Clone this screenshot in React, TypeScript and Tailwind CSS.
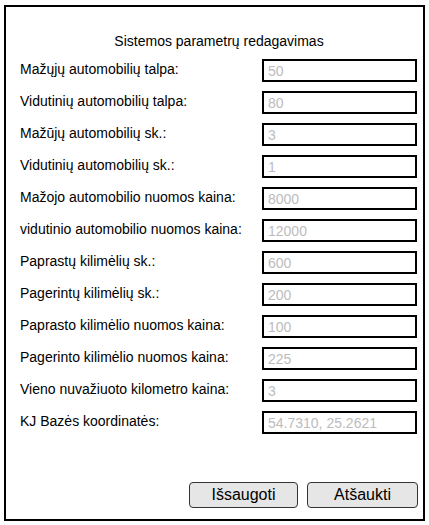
const fields: { label: string; value: string }[] = [
  { label: "Mažųjų automobilių talpa:", value: "50" },
  { label: "Vidutinių automobilių talpa:", value: "80" },
  { label: "Mažūjų automobilių sk.:", value: "3" },
  { label: "Vidutinių automobilių sk.:", value: "1" },
  { label: "Mažojo automobilio nuomos kaina:", value: "8000" },
  { label: "vidutinio automobilio nuomos kaina:", value: "12000" },
  { label: "Paprastų kilimėlių sk.:", value: "600" },
  { label: "Pagerintų kilimėlių sk.:", value: "200" },
  { label: "Paprasto kilimėlio nuomos kaina:", value: "100" },
  { label: "Pagerinto kilimėlio nuomos kaina:", value: "225" },
  { label: "Vieno nuvažiuoto kilometro kaina:", value: "3" },
  { label: "KJ Bazės koordinatės:", value: "54.7310, 25.2621" },
];

const App = () => {
  return (
    <div className="w-[429px] h-[525px] bg-white pt-[5px] pl-[4px] font-['Liberation_Sans',Arial,sans-serif] text-black">
      <div className="w-[421px] h-[516px] border-2 border-black flex flex-col">
        <div className="pt-[26px] h-[17px] box-content text-center text-[14px] leading-[17px] pl-[9px]">
          Sistemos parametrų redagavimas
        </div>

        <div className="mt-[9px] flex flex-col gap-[9px] pl-[14px]">
          {fields.map((f) => (
            <div key={f.label} className="flex items-center h-[23px]">
              <span className="w-[242px] text-[14px] leading-[16px] pb-[3px]">{f.label}</span>
              <input
                readOnly
                placeholder={f.value}
                className="w-[155px] h-[23px] border-2 border-black px-[4px] text-[14px] outline-none placeholder:text-[#bcbcbc]"
              />
            </div>
          ))}
        </div>

        <div className="flex-1" />

        <div className="flex justify-end gap-[9px] pr-[5px] pb-[11px]">
          <button className="w-[109px] h-[26px] rounded-[4px] border border-[#333] bg-[#e6e6e6] text-[16px] leading-[18px]">
            Išsaugoti
          </button>
          <button className="w-[111px] h-[26px] rounded-[4px] border border-[#333] bg-[#e6e6e6] text-[16px] leading-[18px]">
            Atšaukti
          </button>
        </div>
      </div>
    </div>
  );
};

export default App;
